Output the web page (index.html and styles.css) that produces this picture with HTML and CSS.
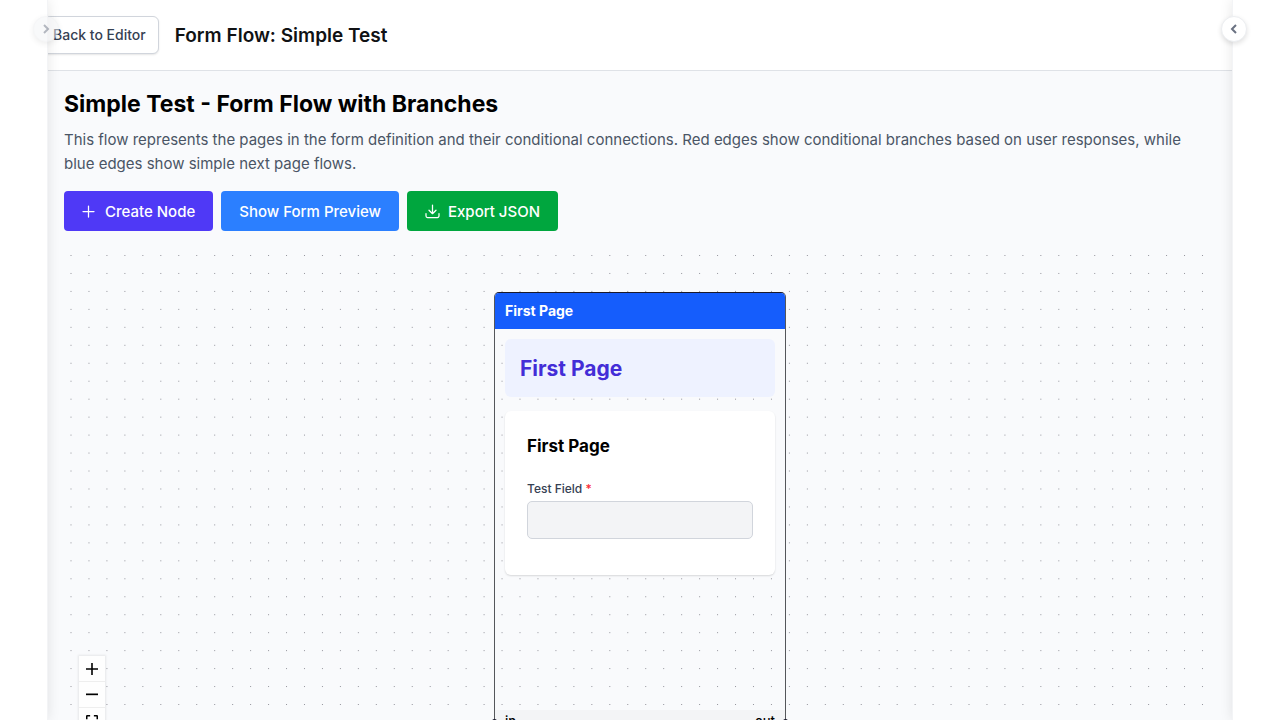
FILE: index.html
```html
<!DOCTYPE html>
<html lang="en">
<head>
<meta charset="utf-8">
<meta name="viewport" content="width=device-width, initial-scale=1">
<title>Form Flow: Simple Test</title>
<link rel="stylesheet" href="styles.css">
</head>
<body>
<div class="app">
  <header class="topbar">
    <button class="back" type="button">
      <svg width="16" height="16" viewBox="0 0 24 24" aria-hidden="true"><path d="M10 19l-7-7 7-7M3 12h18"/></svg>
      Back to Editor
    </button>
    <h1 class="topbar-title">Form Flow: Simple Test</h1>
  </header>

  <main class="content">
    <h2 class="title">Simple Test - Form Flow with Branches</h2>
    <p class="intro">This flow represents the pages in the form definition and their conditional connections. Red edges show conditional branches based on user responses, while blue edges show simple next page flows.</p>
    <div class="actions">
      <button class="action action-create" type="button">
        <svg width="16" height="16" viewBox="0 0 16 16" aria-hidden="true"><path d="M6.500 2v11M1 7.500h11"/></svg>
        Create Node
      </button>
      <button class="action action-preview" type="button">Show Form Preview</button>
      <button class="action action-export" type="button">
        <svg width="16" height="16" viewBox="0 0 16 16" aria-hidden="true"><path d="M7.500 1v8.700M4 6.200l3.500 3.500L11 6.200M1 9.500V12a1.500 1.500 0 0 0 1.500 1.500h10A1.500 1.500 0 0 0 14 12V9.500"/></svg>
        Export JSON
      </button>
    </div>

    <section class="canvas" aria-label="Form flow">
      <svg class="dots" aria-hidden="true">
        <defs>
          <pattern id="grid" width="20" height="20" patternUnits="userSpaceOnUse" patternTransform="translate(6.500 8) scale(.898)">
            <circle cx=".6" cy=".6" r=".6"/>
          </pattern>
        </defs>
        <rect width="100%" height="100%" fill="url(#grid)"/>
      </svg>

      <article class="node">
        <h3 class="node-head">First Page</h3>
        <div class="node-body">
          <div class="banner">First Page</div>
          <div class="card">
            <h4 class="card-title">First Page</h4>
            <label class="label" for="test-field">Test Field <span class="required">*</span></label>
            <input class="field" id="test-field" type="text" disabled>
          </div>
        </div>
        <footer class="node-foot"><span>in</span><span>out</span></footer>
        <i class="port port-in"></i>
        <i class="port port-out"></i>
      </article>

      <div class="controls">
        <button type="button" aria-label="Zoom in"><svg width="12" height="12" viewBox="0 0 32 32"><path d="M32 18.133H18.133V32h-4.266V18.133H0v-4.266h13.867V0h4.266v13.867H32z"/></svg></button>
        <button type="button" aria-label="Zoom out"><svg width="12" height="12" viewBox="0 0 32 32"><path d="M0 12h32v4.500H0z"/></svg></button>
        <button type="button" aria-label="Fit view"><svg width="12" height="12" viewBox="0 0 32 32"><path d="M0 11V3a3 3 0 0 1 3-3h8v4H4v7zM32 11V3a3 3 0 0 0-3-3h-8v4h7v7zM0 21v8a3 3 0 0 0 3 3h8v-4H4v-7zM32 21v8a3 3 0 0 1-3 3h-8v-4h7v-7z"/></svg></button>
      </div>
    </section>
  </main>

  <aside class="drawer drawer-left">
    <button class="toggle toggle-faded" type="button" aria-label="Expand left panel"><svg width="14" height="14" viewBox="0 0 14 14"><path d="M5 3l4 4-4 4"/></svg></button>
  </aside>
  <aside class="drawer drawer-right">
    <button class="toggle" type="button" aria-label="Expand right panel"><svg width="14" height="14" viewBox="0 0 14 14"><path d="M9 3L5 7l4 4"/></svg></button>
  </aside>
</div>
</body>
</html>
```
FILE: styles.css
```css
* {
  box-sizing: border-box;
  margin: 0;
}

body {
  font-family: Inter, "Liberation Sans", sans-serif;
  font-size: 15px;
  line-height: 24px;
  color: #000;
}

button,
input {
  font: inherit;
}

.app {
  position: relative;
  display: flex;
  flex-direction: column;
  height: 100vh;
  overflow: hidden;
  background: #f9fafb;
}

.topbar {
  display: flex;
  align-items: flex-start;
  gap: 16px;
  padding: 16px;
  background: #fff;
  border-bottom: 1px solid #dfe2e7;
}

.back {
  display: flex;
  align-items: center;
  gap: 8px;
  height: 38px;
  padding: 0 12px;
  border: 1px solid #d1d5dc;
  border-radius: 6px;
  background: #fff;
  box-shadow: 0 1px 2px rgba(0, 0, 0, 0.1);
  color: #364153;
  font-size: 14px;
  font-weight: 500;
  line-height: 20px;
}

.back svg {
  fill: none;
  stroke: currentColor;
  stroke-width: 2;
}

.topbar-title {
  font-size: 19px;
  font-weight: 600;
  line-height: 40px;
  height: 38px;
  color: #101214;
}

.content {
  flex: 1;
  display: flex;
  flex-direction: column;
  min-height: 0;
  margin: 0 48px;
  padding: 16px 16px 0;
  background: #f9fafc;
}

.title {
  margin-bottom: 7px;
  font-size: 23px;
  font-weight: 700;
  line-height: 34px;
}

.intro {
  margin-bottom: 15px;
  padding-right: 12px;
  color: #4a5565;
}

.actions {
  display: flex;
  gap: 8px;
  margin-bottom: 16px;
}

.action {
  display: flex;
  align-items: center;
  gap: 7px;
  height: 40px;
  padding: 2px 18px 0;
  border: 0;
  border-radius: 4px;
  color: #fff;
  font-weight: 500;
}

.action svg {
  fill: none;
  stroke: currentColor;
  stroke-width: 1.25;
  stroke-linecap: round;
  stroke-linejoin: round;
}

.action-create {
  background: #4f39f6;
}

.action-preview {
  background: #2b7fff;
}

.action-export {
  background: #00a63e;
}

.canvas {
  flex: 1;
  position: relative;
  min-height: 0;
}

.dots {
  display: block;
  width: 100%;
  height: 100%;
  fill: #7c7c85;
}

.node {
  position: absolute;
  top: 45px;
  left: 50%;
  width: 292px;
  margin-left: -146px;
  border: 1px solid #55575b;
  border-top-color: #1a192b;
  border-radius: 5px;
}

.node-head {
  padding: 6px 10px;
  border-radius: 4px 4px 0 0;
  background: #155dfc;
  color: #fff;
  font-size: 14px;
  font-weight: 700;
}

.node-body {
  display: flex;
  flex-direction: column;
  gap: 14px;
  height: 381px;
  padding: 10px;
}

.banner {
  padding: 15px 15px 13px;
  border-radius: 6px;
  background: #eef2ff;
  color: #432dd7;
  font-size: 21px;
  font-weight: 700;
  line-height: 30px;
}

.card {
  padding: 22px 22px 36px;
  border-radius: 6px;
  background: #fff;
  box-shadow: 0 1px 2px rgba(0, 0, 0, 0.14);
}

.card-title {
  margin-bottom: 20px;
  font-size: 17px;
  font-weight: 700;
  line-height: 26px;
}

.label {
  display: block;
  margin-bottom: 2px;
  color: #364153;
  font-size: 12px;
  font-weight: 500;
  line-height: 20px;
}

.required {
  color: #fb2c36;
}

.field {
  display: block;
  width: 100%;
  height: 38px;
  padding: 0 10px;
  border: 1px solid #d1d5dc;
  border-radius: 5px;
  background: #f3f4f6;
}

.node-foot {
  display: flex;
  justify-content: space-between;
  padding: 0 10px;
  background: #f3f4f6;
  color: #000;
  font-size: 13px;
  font-weight: 500;
  line-height: 22px;
}

.port {
  position: absolute;
  bottom: 8px;
  width: 5px;
  height: 5px;
  border-radius: 50%;
  background: #1a192b;
}

.port-in {
  left: -3px;
}

.port-out {
  right: -3px;
}

.controls {
  position: absolute;
  top: 409px;
  left: 15px;
  display: flex;
  flex-direction: column;
  box-shadow: 0 0 2px 1px rgba(0, 0, 0, 0.08);
}

.controls button {
  display: flex;
  align-items: center;
  justify-content: center;
  width: 26px;
  height: 26px;
  padding: 0;
  border: 0;
  border-bottom: 1px solid #eee;
  background: #fefefe;
}

.drawer {
  position: absolute;
  top: 0;
  bottom: 0;
  width: 48px;
  background: #fff;
  box-shadow: 0 0 12px rgba(0, 0, 0, 0.1);
}

.drawer-left {
  left: 0;
  border-right: 1px solid #f3f4f6;
}

.drawer-right {
  right: 0;
  border-left: 1px solid #f3f4f6;
}

.toggle {
  position: absolute;
  top: 16px;
  display: flex;
  align-items: center;
  justify-content: center;
  width: 26px;
  height: 26px;
  padding: 0;
  border: 1px solid #eceef1;
  border-radius: 50%;
  background: #fff;
  box-shadow: 0 2px 5px rgba(0, 0, 0, 0.12);
  color: #6a7282;
}

.drawer-left .toggle {
  right: -12px;
}

.drawer-right .toggle {
  left: -12px;
}

.toggle-faded {
  background: #f3f4f6;
  opacity: 0.5;
}

.toggle svg {
  fill: none;
  stroke: currentColor;
  stroke-width: 2;
}
```
